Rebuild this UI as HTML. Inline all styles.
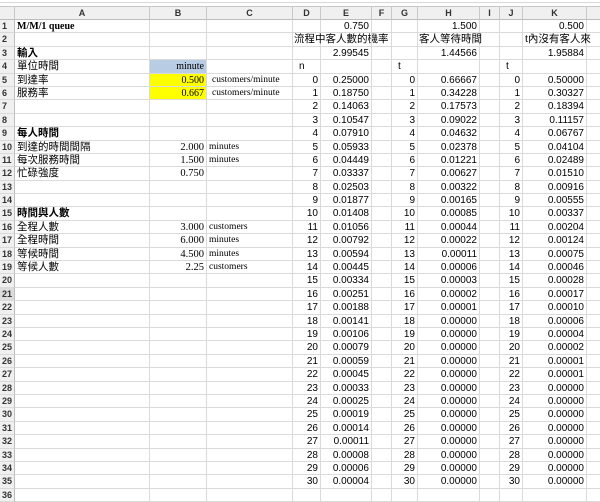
<!DOCTYPE html>
<html><head><meta charset="utf-8"><style>
*{margin:0;padding:0;box-sizing:border-box}
body{width:600px;height:496px;overflow:hidden;background:#fff;font-family:"Liberation Sans","Noto Sans CJK TC",sans-serif;font-size:10px;color:#000}
.top{height:7px;border-bottom:1px solid #c8c8c8;background:#fff;position:relative}
.top:before{content:"";position:absolute;left:0;right:0;top:2px;height:1px;background:#d8d8d8}
.r{display:flex;height:13.4px;line-height:13px;white-space:nowrap}
.r>span{flex:none;border-right:1px solid #dadada;border-bottom:1px solid #dadada;overflow:visible;padding:0 2px;text-align:right;position:relative}
.r>span:nth-child(1){width:15px;background:#f0f0f0;border-right:1px solid #bdbdbd;text-align:left;padding:0 0 0 2px;font-weight:bold;font-size:9px;color:#333;font-family:"Liberation Sans",sans-serif}
.r>span:nth-child(2){width:135px;text-align:left;font-size:10.5px}
.r>span:nth-child(3){width:57px}
.r>span:nth-child(4){width:86px;text-align:left;font-family:"Liberation Serif",serif;font-size:9.5px;padding-left:5px}
.r>span:nth-child(5){width:28px}
.r>span:nth-child(6){width:51px}
.r>span:nth-child(7){width:20px}
.r>span:nth-child(8){width:26px}
.r>span:nth-child(9){width:62px}
.r>span:nth-child(10){width:20px}
.r>span:nth-child(11){width:23px}
.r>span:nth-child(12){width:64px}
.r>span:nth-child(13){width:20px;border-right:none}
.h{height:13px;line-height:12px}
.h>span{background:#f0f0f0;text-align:center!important;font-weight:bold;font-size:9px!important;color:#333;font-family:"Liberation Sans",sans-serif!important;padding:0!important;border-right:1px solid #c8c8c8!important;border-bottom:1px solid #bdbdbd!important}
.sel>span:nth-child(1){background:#dcdcdc}
.sf{font-family:"Liberation Serif",serif}
.b{font-weight:bold}
.y{background:#ffff00}
.bl{background:#b8cce4}
em{font-style:normal;position:absolute;top:0;font-size:10.5px}
</style></head><body>
<div class="top"></div>
<div class="r h"><span></span><span>A</span><span>B</span><span>C</span><span>D</span><span>E</span><span>F</span><span>G</span><span>H</span><span>I</span><span>J</span><span>K</span><span></span></div>
<div class="r"><span>1</span><span class="sf b" style="font-size:10px">M/M/1 queue</span><span></span><span></span><span></span><span>0.750</span><span></span><span></span><span>1.500</span><span></span><span></span><span>0.500</span><span></span></div>
<div class="r"><span>2</span><span></span><span></span><span></span><span><em style="left:1px">流程中客人數的機率</em></span><span></span><span></span><span></span><span><em style="left:1px">客人等待時間</em></span><span></span><span></span><span><em style="left:2px">t內沒有客人來</em></span><span></span></div>
<div class="r"><span>3</span><span class="b">輸入</span><span></span><span></span><span></span><span>2.99545</span><span></span><span></span><span>1.44566</span><span></span><span></span><span>1.95884</span><span></span></div>
<div class="r"><span>4</span><span>單位時間</span><span class="bl sf">minute</span><span></span><span style="text-align:left;padding-left:6px">n</span><span></span><span></span><span style="text-align:left;padding-left:6px">t</span><span></span><span></span><span style="text-align:left;padding-left:6px">t</span><span></span><span></span></div>
<div class="r"><span>5</span><span>到達率</span><span class="y sf">0.500</span><span>customers/minute</span><span>0</span><span>0.25000</span><span></span><span>0</span><span>0.66667</span><span></span><span>0</span><span>0.50000</span><span></span></div>
<div class="r"><span>6</span><span>服務率</span><span class="y sf">0.667</span><span>customers/minute</span><span>1</span><span>0.18750</span><span></span><span>1</span><span>0.34228</span><span></span><span>1</span><span>0.30327</span><span></span></div>
<div class="r"><span>7</span><span></span><span></span><span></span><span>2</span><span>0.14063</span><span></span><span>2</span><span>0.17573</span><span></span><span>2</span><span>0.18394</span><span></span></div>
<div class="r"><span>8</span><span></span><span></span><span></span><span>3</span><span>0.10547</span><span></span><span>3</span><span>0.09022</span><span></span><span>3</span><span>0.11157</span><span></span></div>
<div class="r"><span>9</span><span class="b">每人時間</span><span></span><span></span><span>4</span><span>0.07910</span><span></span><span>4</span><span>0.04632</span><span></span><span>4</span><span>0.06767</span><span></span></div>
<div class="r"><span>10</span><span>到達的時間間隔</span><span class="sf" style="font-size:10.5px">2.000</span><span style="padding-left:2px">minutes</span><span>5</span><span>0.05933</span><span></span><span>5</span><span>0.02378</span><span></span><span>5</span><span>0.04104</span><span></span></div>
<div class="r"><span>11</span><span>每次服務時間</span><span class="sf" style="font-size:10.5px">1.500</span><span style="padding-left:2px">minutes</span><span>6</span><span>0.04449</span><span></span><span>6</span><span>0.01221</span><span></span><span>6</span><span>0.02489</span><span></span></div>
<div class="r"><span>12</span><span>忙碌強度</span><span class="sf" style="font-size:10.5px">0.750</span><span></span><span>7</span><span>0.03337</span><span></span><span>7</span><span>0.00627</span><span></span><span>7</span><span>0.01510</span><span></span></div>
<div class="r"><span>13</span><span></span><span></span><span></span><span>8</span><span>0.02503</span><span></span><span>8</span><span>0.00322</span><span></span><span>8</span><span>0.00916</span><span></span></div>
<div class="r"><span>14</span><span></span><span></span><span></span><span>9</span><span>0.01877</span><span></span><span>9</span><span>0.00165</span><span></span><span>9</span><span>0.00555</span><span></span></div>
<div class="r"><span>15</span><span class="b">時間與人數</span><span></span><span></span><span>10</span><span>0.01408</span><span></span><span>10</span><span>0.00085</span><span></span><span>10</span><span>0.00337</span><span></span></div>
<div class="r"><span>16</span><span>全程人數</span><span class="sf" style="font-size:10.5px">3.000</span><span style="padding-left:2px">customers</span><span>11</span><span>0.01056</span><span></span><span>11</span><span>0.00044</span><span></span><span>11</span><span>0.00204</span><span></span></div>
<div class="r"><span>17</span><span>全程時間</span><span class="sf" style="font-size:10.5px">6.000</span><span style="padding-left:2px">minutes</span><span>12</span><span>0.00792</span><span></span><span>12</span><span>0.00022</span><span></span><span>12</span><span>0.00124</span><span></span></div>
<div class="r"><span>18</span><span>等候時間</span><span class="sf" style="font-size:10.5px">4.500</span><span style="padding-left:2px">minutes</span><span>13</span><span>0.00594</span><span></span><span>13</span><span>0.00011</span><span></span><span>13</span><span>0.00075</span><span></span></div>
<div class="r"><span>19</span><span>等候人數</span><span class="sf" style="font-size:10.5px">2.25</span><span style="padding-left:2px">customers</span><span>14</span><span>0.00445</span><span></span><span>14</span><span>0.00006</span><span></span><span>14</span><span>0.00046</span><span></span></div>
<div class="r"><span>20</span><span></span><span></span><span></span><span>15</span><span>0.00334</span><span></span><span>15</span><span>0.00003</span><span></span><span>15</span><span>0.00028</span><span></span></div>
<div class="r sel"><span>21</span><span></span><span></span><span></span><span>16</span><span>0.00251</span><span></span><span>16</span><span>0.00002</span><span></span><span>16</span><span>0.00017</span><span></span></div>
<div class="r"><span>22</span><span></span><span></span><span></span><span>17</span><span>0.00188</span><span></span><span>17</span><span>0.00001</span><span></span><span>17</span><span>0.00010</span><span></span></div>
<div class="r"><span>23</span><span></span><span></span><span></span><span>18</span><span>0.00141</span><span></span><span>18</span><span>0.00000</span><span></span><span>18</span><span>0.00006</span><span></span></div>
<div class="r"><span>24</span><span></span><span></span><span></span><span>19</span><span>0.00106</span><span></span><span>19</span><span>0.00000</span><span></span><span>19</span><span>0.00004</span><span></span></div>
<div class="r"><span>25</span><span></span><span></span><span></span><span>20</span><span>0.00079</span><span></span><span>20</span><span>0.00000</span><span></span><span>20</span><span>0.00002</span><span></span></div>
<div class="r"><span>26</span><span></span><span></span><span></span><span>21</span><span>0.00059</span><span></span><span>21</span><span>0.00000</span><span></span><span>21</span><span>0.00001</span><span></span></div>
<div class="r"><span>27</span><span></span><span></span><span></span><span>22</span><span>0.00045</span><span></span><span>22</span><span>0.00000</span><span></span><span>22</span><span>0.00001</span><span></span></div>
<div class="r"><span>28</span><span></span><span></span><span></span><span>23</span><span>0.00033</span><span></span><span>23</span><span>0.00000</span><span></span><span>23</span><span>0.00000</span><span></span></div>
<div class="r"><span>29</span><span></span><span></span><span></span><span>24</span><span>0.00025</span><span></span><span>24</span><span>0.00000</span><span></span><span>24</span><span>0.00000</span><span></span></div>
<div class="r"><span>30</span><span></span><span></span><span></span><span>25</span><span>0.00019</span><span></span><span>25</span><span>0.00000</span><span></span><span>25</span><span>0.00000</span><span></span></div>
<div class="r"><span>31</span><span></span><span></span><span></span><span>26</span><span>0.00014</span><span></span><span>26</span><span>0.00000</span><span></span><span>26</span><span>0.00000</span><span></span></div>
<div class="r"><span>32</span><span></span><span></span><span></span><span>27</span><span>0.00011</span><span></span><span>27</span><span>0.00000</span><span></span><span>27</span><span>0.00000</span><span></span></div>
<div class="r"><span>33</span><span></span><span></span><span></span><span>28</span><span>0.00008</span><span></span><span>28</span><span>0.00000</span><span></span><span>28</span><span>0.00000</span><span></span></div>
<div class="r"><span>34</span><span></span><span></span><span></span><span>29</span><span>0.00006</span><span></span><span>29</span><span>0.00000</span><span></span><span>29</span><span>0.00000</span><span></span></div>
<div class="r"><span>35</span><span></span><span></span><span></span><span>30</span><span>0.00004</span><span></span><span>30</span><span>0.00000</span><span></span><span>30</span><span>0.00000</span><span></span></div>
<div class="r"><span>36</span><span></span><span></span><span></span><span></span><span></span><span></span><span></span><span></span><span></span><span></span><span></span><span></span></div>
</body></html>
